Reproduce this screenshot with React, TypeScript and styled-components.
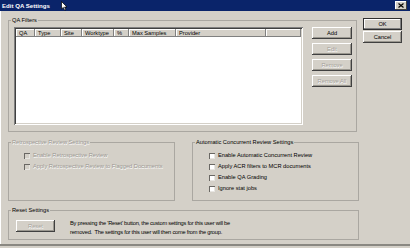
import React from "react";
import styled, { createGlobalStyle } from "styled-components";

const FONT = `"Liberation Sans", Arial, sans-serif`;

const Global = createGlobalStyle`
  html, body { margin: 0; padding: 0; background: #d4d0c8; overflow: hidden; }
  * { box-sizing: border-box; }
`;

const Window = styled.div`
  position: relative;
  width: 410px;
  height: 248px;
  background: #d4d0c8;
  font-family: ${FONT};
  font-size: 5.7px;
  line-height: 7px;
  color: #000;
  display: flex;
  flex-direction: column;
  overflow: hidden;
  box-shadow: inset 0 -2px 0 #d4d0c8, inset 0 -4px 0 #8a8882, inset 1px 0 0 #fff;
`;

const TitleBar = styled.div`
  flex: none;
  height: 11px;
  background: #0a246a;
  display: flex;
  align-items: center;
  justify-content: space-between;
  padding: 0 3px 0 2px;
`;

const Title = styled.span`
  color: #fff;
  font-weight: bold;
  font-size: 6.1px;
  line-height: 11px;
`;

const CloseBtn = styled.div`
  width: 12px;
  height: 9px;
  background: #d4d0c8;
  box-shadow: inset -1px -1px 0 #404040, inset 1px 1px 0 #fff;
  display: flex;
  align-items: center;
  justify-content: center;
`;

const Cursor = styled.svg`
  position: absolute;
  left: 61px;
  top: 1px;
`;

const Body = styled.div`
  flex: 1;
  display: flex;
  padding: 6px 0 0 8px;
`;

const LeftCol = styled.div`
  width: 351px;
  display: flex;
  flex-direction: column;
`;

const RightCol = styled.div`
  margin-left: 4px;
  padding-top: 1px;
  display: flex;
  flex-direction: column;
  gap: 1px;
`;

const Group = styled.fieldset<{ $w: number; $h: number }>`
  margin: 0;
  padding: 0;
  min-width: 0;
  width: ${(p) => p.$w}px;
  height: ${(p) => p.$h}px;
  border: 1px solid #aaa7a1;
`;

const Legend = styled.legend<{ $disabled?: boolean }>`
  margin-left: 2px;
  padding: 0 1px;
  font-size: 5.7px;
  line-height: 7px;
  color: ${(p) => (p.$disabled ? "#9a9792" : "#000")};
  text-shadow: ${(p) => (p.$disabled ? "0.5px 0.5px 0 #fff" : "none")};
`;

const FilterContent = styled.div`
  display: flex;
  gap: 9px;
  padding: 3px 0 0 5px;
`;

const ListView = styled.div`
  width: 289px;
  height: 98px;
  background: #fff;
  padding: 2px;
  box-shadow: inset 1px 1px 0 #808080, inset -1px -1px 0 #fff, inset 2px 2px 0 #404040,
    inset -2px -2px 0 #d4d0c8;
`;

const Header = styled.div`
  display: flex;
  height: 8px;
`;

const HeaderCell = styled.div<{ $w?: number }>`
  flex: ${(p) => (p.$w ? `0 0 ${p.$w}px` : "1")};
  height: 8px;
  padding-left: 3px;
  background: #d4d0c8;
  box-shadow: inset -1px -1px 0 #808080, inset 1px 1px 0 #fff;
  line-height: 8px;
  white-space: nowrap;
  overflow: hidden;
`;

const ButtonCol = styled.div`
  display: flex;
  flex-direction: column;
  gap: 4px;
`;

const Btn = styled.button<{ $default?: boolean; $w?: number }>`
  width: ${(p) => p.$w ?? 40}px;
  height: 12px;
  padding: 0;
  margin: 0;
  border: none;
  font-family: ${FONT};
  font-size: 5.7px;
  line-height: 12px;
  color: #000;
  background: #d4d0c8;
  box-shadow: ${(p) =>
    p.$default
      ? "inset 0 0 0 1px #303030, inset -2px -2px 0 #808080, inset 2px 2px 0 #fff"
      : "inset -1px -1px 0 #404040, inset 1px 1px 0 #fff, inset -2px -2px 0 #9a978f"};
  &:disabled {
    color: #a4a19b;
    text-shadow: 0.5px 0.5px 0 #fff;
  }
`;

const Row = styled.div`
  display: flex;
  gap: 17px;
  margin-top: 7px;
`;

const CheckList = styled.div<{ $pad: number }>`
  display: flex;
  flex-direction: column;
  padding: 4px 0 0 ${(p) => p.$pad}px;
`;

const CheckRow = styled.label<{ $disabled?: boolean }>`
  display: flex;
  align-items: center;
  gap: 3px;
  height: 11px;
  white-space: nowrap;
  color: ${(p) => (p.$disabled ? "#9a9792" : "#000")};
  text-shadow: ${(p) => (p.$disabled ? "0.5px 0.5px 0 #fff" : "none")};
`;

const Box = styled.span<{ $disabled?: boolean }>`
  flex: none;
  width: 6px;
  height: 6px;
  background: ${(p) => (p.$disabled ? "#d4d0c8" : "#fff")};
  box-shadow: inset 1px 1px 0 #6a6864, inset -1px -1px 0 #e8e6e2;
`;

const ResetGroupWrap = styled.div`
  margin-top: 6px;
`;

const ResetContent = styled.div`
  display: flex;
  align-items: flex-start;
  gap: 15px;
  padding: 6px 0 0 7px;
`;

const ResetText = styled.p`
  margin: -1px 0 0 0;
  line-height: 9px;
  letter-spacing: -0.22px;
  white-space: pre;
`;

function Check({ label, disabled }: { label: string; disabled?: boolean }) {
  return (
    <CheckRow $disabled={disabled}>
      <Box $disabled={disabled} />
      {label}
    </CheckRow>
  );
}

const columns: [string, number][] = [
  ["QA", 19],
  ["Type", 26],
  ["Site", 21],
  ["Worktype", 32],
  ["%", 15],
  ["Max Samples", 47],
  ["Provider", 90],
];

export default function App() {
  return (
    <>
      <Global />
      <Window>
        <TitleBar>
          <Title>Edit QA Settings</Title>
          <CloseBtn>
            <svg width="6" height="5" viewBox="0 0 6 5">
              <path d="M0.5 0.5 L5.5 4.5 M5.5 0.5 L0.5 4.5" stroke="#000" strokeWidth="1.2" />
            </svg>
          </CloseBtn>
        </TitleBar>
        <Cursor width="7" height="10" viewBox="0 0 7 10">
          <path d="M0.5 0.5 L0.5 8 L2.3 6.4 L3.6 9.3 L4.8 8.8 L3.6 6 L6 6 Z" fill="#fff" stroke="#000" strokeWidth="0.7" />
        </Cursor>
        <Body>
          <LeftCol>
            <Group $w={349} $h={115}>
              <Legend>QA Filters</Legend>
              <FilterContent>
                <ListView>
                  <Header>
                    {columns.map(([name, w]) => (
                      <HeaderCell key={name} $w={w}>
                        {name}
                      </HeaderCell>
                    ))}
                    <HeaderCell />
                  </Header>
                </ListView>
                <ButtonCol>
                  <Btn>Add</Btn>
                  <Btn disabled>Edit</Btn>
                  <Btn disabled>Remove</Btn>
                  <Btn disabled>Remove All</Btn>
                </ButtonCol>
              </FilterContent>
            </Group>
            <Row>
              <Group $w={167} $h={62}>
                <Legend $disabled>Retrospective Review Settings</Legend>
                <CheckList $pad={15}>
                  <Check disabled label="Enable Retrospective Review" />
                  <Check disabled label="Apply Retrospective Review to Flagged Documents" />
                </CheckList>
              </Group>
              <Group $w={167} $h={62}>
                <Legend>Automatic Concurrent Review Settings</Legend>
                <CheckList $pad={16}>
                  <Check label="Enable Automatic Concurrent Review" />
                  <Check label="Apply ACR filters to MCR documents" />
                  <Check label="Enable QA Grading" />
                  <Check label="Ignore stat jobs" />
                </CheckList>
              </Group>
            </Row>
            <ResetGroupWrap>
              <Group $w={351} $h={33}>
                <Legend>Reset Settings</Legend>
                <ResetContent>
                  <Btn disabled $w={39}>Reset</Btn>
                  <ResetText>
                    {"By pressing the 'Reset' button, the custom settings for this user will be\nremoved.  The settings for this user will then come from the group."}
                  </ResetText>
                </ResetContent>
              </Group>
            </ResetGroupWrap>
          </LeftCol>
          <RightCol>
            <Btn $default $w={39}>OK</Btn>
            <Btn $w={39}>Cancel</Btn>
          </RightCol>
        </Body>
      </Window>
    </>
  );
}
